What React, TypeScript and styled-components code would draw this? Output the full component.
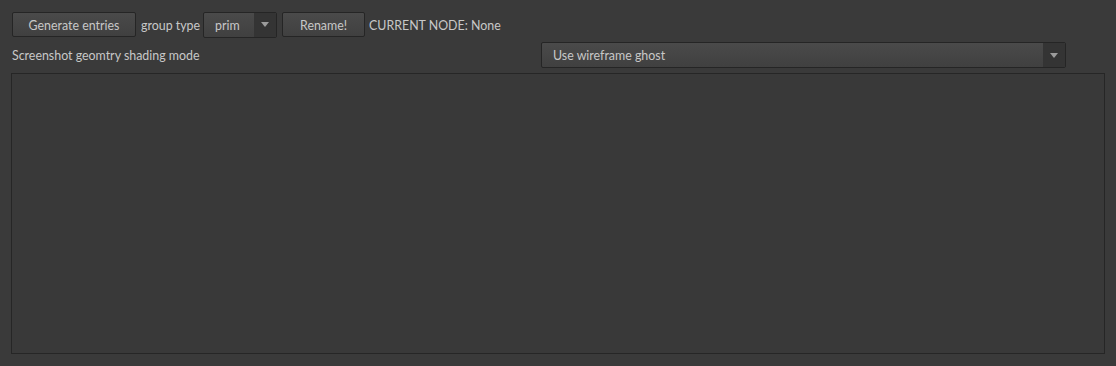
import styled, { createGlobalStyle } from 'styled-components';

const GlobalStyle = createGlobalStyle`
  html, body {
    margin: 0;
    padding: 0;
    background: #3a3a3a;
  }
  body {
    font-family: Lato, "Open Sans", sans-serif;
    font-size: 12.4px;
    color: #c8c8c8;
  }
`;

const Page = styled.div`
  width: 1116px;
  height: 366px;
  box-sizing: border-box;
  padding: 12px 11px 12px 11px;
  display: flex;
  flex-direction: column;
`;

const Toolbar = styled.div`
  display: flex;
  align-items: center;
  height: 25px;
  padding-left: 1px;
`;

const Button = styled.button<{ $width: number }>`
  width: ${(p) => p.$width}px;
  height: 25px;
  box-sizing: border-box;
  border: 1px solid #252525;
  border-radius: 2px;
  background: linear-gradient(#4a4a4a, #404040);
  color: #c8c8c8;
  font-family: inherit;
  font-size: 12.4px;
  padding: 1px 0 0 0;
  cursor: pointer;
`;

const Label = styled.span<{ $left?: number; $right?: number }>`
  margin: 1px ${(p) => p.$right ?? 0}px 0 ${(p) => p.$left ?? 0}px;
  white-space: nowrap;
  color: #c8c8c8;
`;

const Combo = styled.div<{ $width: number }>`
  width: ${(p) => p.$width}px;
  height: 26px;
  box-sizing: border-box;
  border: 1px solid #252525;
  border-radius: 2px;
  background: linear-gradient(#4a4a4a, #404040);
  display: flex;
  align-items: stretch;
  overflow: hidden;
`;

const ComboText = styled.div`
  flex: 1;
  display: flex;
  align-items: center;
  padding: 1px 0 0 11px;
  color: #c8c8c8;
`;

const ComboArrow = styled.div`
  width: 22px;
  display: flex;
  align-items: center;
  justify-content: center;
  background: #343434;

  &::after {
    content: '';
    width: 0;
    height: 0;
    border-left: 4px solid transparent;
    border-right: 4px solid transparent;
    border-top: 5px solid #9c9c9c;
  }
`;

const SettingRow = styled.div`
  display: grid;
  grid-template-columns: 529px 525px;
  align-items: center;
  margin-top: 5px;
  height: 27px;
  padding-left: 1px;
`;

const Panel = styled.div`
  margin-top: 4px;
  width: 1094px;
  height: 282px;
  box-sizing: border-box;
  border: 1px solid #262626;
  background: #393939;
`;

function App() {
  return (
    <>
      <GlobalStyle />
      <Page>
        <Toolbar>
          <Button $width={124}>Generate entries</Button>
          <Label $left={5} $right={3}>group type</Label>
          <Combo $width={74}>
            <ComboText>prim</ComboText>
            <ComboArrow />
          </Combo>
          <Button $width={83} style={{ marginLeft: 5 }}>Rename!</Button>
          <Label $left={4}>CURRENT NODE: None</Label>
        </Toolbar>
        <SettingRow>
          <Label>Screenshot geomtry shading mode</Label>
          <Combo $width={525}>
            <ComboText>Use wireframe ghost</ComboText>
            <ComboArrow />
          </Combo>
        </SettingRow>
        <Panel />
      </Page>
    </>
  );
}

export default App;
